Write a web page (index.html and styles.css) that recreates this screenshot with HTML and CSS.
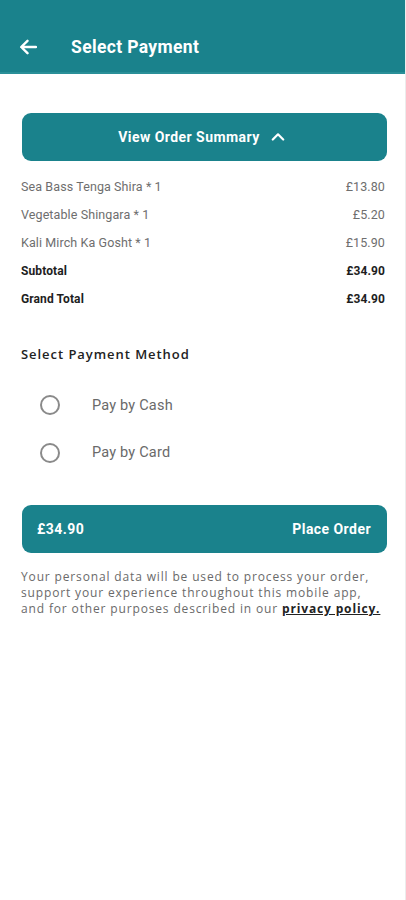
FILE: index.html
```html
<!DOCTYPE html>
<html>
<head>
<meta charset="utf-8">
<link rel="stylesheet" href="styles.css">
</head>
<body>
<div class="app">
  <header class="topbar">
    <svg class="back" width="18" height="16" viewBox="0 0 18 16"><path d="M17 8H2.5M8.5 1.8L2.2 8l6.3 6.2" fill="none" stroke="#fff" stroke-width="2.4" stroke-linecap="round" stroke-linejoin="round"/></svg>
    <h1 class="title">Select Payment</h1>
  </header>
  <main class="content">
    <button class="btn summary-btn">View Order Summary
      <svg class="chev" width="14" height="9" viewBox="0 0 14 9"><path d="M1.8 7.5L7 2.3l5.2 5.2" fill="none" stroke="#fff" stroke-width="2.2" stroke-linecap="round" stroke-linejoin="round"/></svg>
    </button>
    <div class="items">
      <div class="row"><span>Sea Bass Tenga Shira * 1</span><span>£13.80</span></div>
      <div class="row"><span>Vegetable Shingara * 1</span><span>£5.20</span></div>
      <div class="row"><span>Kali Mirch Ka Gosht * 1</span><span>£15.90</span></div>
      <div class="row total"><span>Subtotal</span><span>£34.90</span></div>
      <div class="row total"><span>Grand Total</span><span>£34.90</span></div>
    </div>
    <h2 class="method-title">Select Payment Method</h2>
    <div class="options">
      <div class="option"><span class="radio"></span><span class="opt-label">Pay by Cash</span></div>
      <div class="option"><span class="radio"></span><span class="opt-label">Pay by Card</span></div>
    </div>
    <button class="btn place-btn"><span>£34.90</span><span>Place Order</span></button>
    <p class="note">Your personal data will be used to process your order, support your experience throughout this mobile app, and for other purposes described in our <a class="link">privacy policy.</a></p>
  </main>
</div>
</body>
</html>
```
FILE: styles.css
```css
* { box-sizing: border-box; }
html, body { margin: 0; padding: 0; background: #fff; }
body { font-family: Roboto, "Liberation Sans", sans-serif; }
.app { width: 406px; min-height: 900px; border-right: 1px solid #ececec; }
.topbar {
  height: 74px;
  background: #1a828c;
  border-bottom: 2px solid #2a8f98;
  display: flex;
  align-items: center;
  padding: 21px 0 0 19px;
}
.back { display: block; }
.title {
  margin: 0 0 0 34px;
  color: #fff;
  font-size: 17.5px;
  font-weight: 700;
  letter-spacing: 0.35px;
}
.content { padding: 39px 20px 0 21px; }
.btn {
  width: 365px;
  margin-left: 1px;
  height: 48px;
  border: 0;
  border-radius: 9px;
  background: #1a828c;
  color: #fff;
  font-family: Roboto, "Liberation Sans", sans-serif;
  font-weight: 700;
  font-size: 14px;
  letter-spacing: 0.45px;
  display: flex;
  align-items: center;
}
.summary-btn { justify-content: center; gap: 11px; padding-left: 0; }
.chev { display: block; margin-top: -1px; }
.items { margin-top: 11px; }
.row {
  display: flex;
  justify-content: space-between;
  height: 28.3px;
  align-items: center;
  font-size: 12.5px;
  color: #6e6e6e;
  letter-spacing: 0.1px;
}
.row.total { color: #1e1e1e; font-weight: 700; font-size: 12px; }
.method-title {
  margin: 32px 0 0 0;
  font-family: "Open Sans", "Liberation Sans", sans-serif;
  font-size: 13px;
  font-weight: 600;
  color: #222;
  letter-spacing: 0.95px;
}
.options { margin-top: 18px; padding-left: 19px; }
.option { display: flex; align-items: center; height: 47.5px; }
.radio {
  width: 20px;
  height: 20px;
  border: 2px solid #8a8a8a;
  border-radius: 50%;
}
.opt-label { margin-left: 32px; font-size: 14.5px; color: #6a6a6a; letter-spacing: 0.2px; }
.place-btn {
  margin-top: 29px;
  justify-content: space-between;
  padding: 0 16px 0 15px;
}
.note {
  margin: 16px 0 0 0;
  width: 360px;
  font-family: "Open Sans", "Liberation Sans", sans-serif;
  font-size: 12px;
  line-height: 16px;
  color: #6a6a6a;
  letter-spacing: 0.85px;
}
.link { color: #222; font-weight: 700; text-decoration: underline; }
```
